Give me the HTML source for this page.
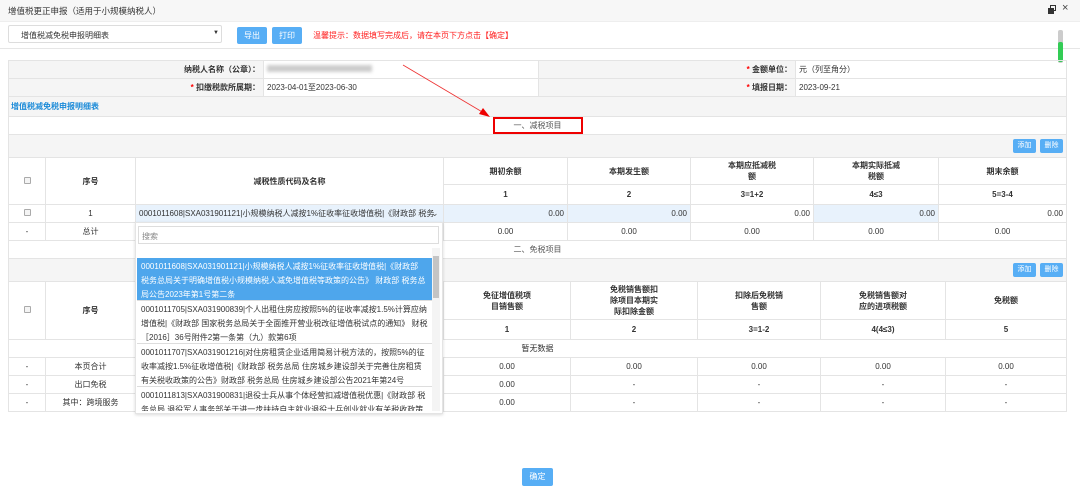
<!DOCTYPE html>
<html><head><meta charset="utf-8"><style>
*{margin:0;padding:0;box-sizing:border-box}
body{width:1080px;height:491px;overflow:hidden;background:#fff;font-family:"Liberation Sans","Noto Sans CJK SC",sans-serif;font-size:8px;color:#333;position:relative}
.a{position:absolute}
table{border-collapse:collapse;position:absolute;table-layout:fixed}
td{border:1px solid #e4e4e4;text-align:center;font-size:8px;padding:0 3px;overflow:hidden;white-space:nowrap}
.g{background:#f5f5f5}
.b{font-weight:bold}
.btn{position:absolute;background:#57aef5;color:#fff;font-size:8px;text-align:center;border-radius:2px}
.hl{background:#e8f2fc}
.r{text-align:right}
.cb{display:inline-block;width:7px;height:7px;border:1px solid #aaa;border-radius:1px;background:#f4f4f4}
.it{padding:2px 4px;line-height:14px;font-size:8px;border-bottom:1px solid #ddd;white-space:normal;height:43px;overflow:hidden}
</style></head><body>
<div class="a" style="left:0;top:0;width:1080px;height:22px;background:#f7f7f7;border-bottom:1px solid #eee"></div>
<div class="a" style="left:8px;top:5px;font-size:8.5px">增值税更正申报（适用于小规模纳税人）</div>
<div class="a" style="left:1050px;top:5px;width:6px;height:6px;border:1.5px solid #333"></div>
<div class="a" style="left:1048px;top:8px;width:6px;height:6px;background:#333"></div>
<div class="a" style="left:1062px;top:2px;font-size:11px;color:#444">×</div>
<div class="a" style="left:8px;top:25px;width:214px;height:18px;border:1px solid #ddd;border-radius:2px;padding:4px 12px;font-size:8px">增值税减免税申报明细表</div>
<div class="a" style="left:213px;top:30px;font-size:6px">▼</div>
<div class="btn" style="left:237px;top:27px;width:30px;height:17px;line-height:17px">导出</div>
<div class="btn" style="left:272px;top:27px;width:30px;height:17px;line-height:17px">打印</div>
<div class="a" style="left:313px;top:30px;color:#f22;font-size:8px">温馨提示：数据填写完成后，请在本页下方点击【确定】</div>
<div class="a" style="left:0;top:48px;width:1080px;height:1px;background:#e6e6e6"></div>
<div class="a" style="left:1058px;top:30px;width:5px;height:33px;background:#ccc;border-radius:2px"></div>
<div class="a" style="left:1058px;top:42px;width:5px;height:20px;background:#3c5;border-radius:2px"></div>

<table style="left:8px;top:60px;width:1059px">
<col style="width:255px"><col style="width:275px"><col style="width:257px"><col>
<tr style="height:18px"><td class="g b r">纳税人名称（公章）：</td><td style="text-align:left"><span style="display:inline-block;width:105px;height:7px;background:#ccc;filter:blur(1.5px)"></span></td><td class="g b r"><span style="color:red">*</span> 金额单位：</td><td style="text-align:left">元（列至角分）</td></tr>
<tr style="height:18px"><td class="g b r"><span style="color:red">*</span> 扣缴税款所属期：</td><td style="text-align:left">2023-04-01至2023-06-30</td><td class="g b r"><span style="color:red">*</span> 填报日期：</td><td style="text-align:left">2023-09-21</td></tr>
<tr style="height:20px"><td colspan="4" class="g" style="text-align:left;padding-left:2px;color:#1a8ad8;font-weight:bold">增值税减免税申报明细表</td></tr>
<tr style="height:18px"><td colspan="4"><span style="display:inline-block;border:2px solid #e00;width:90px;height:17px;line-height:13px;color:#555">一、减税项目</span></td></tr>
<tr style="height:23px"><td colspan="4" class="g"></td></tr>
</table>
<div class="btn" style="left:1013px;top:139px;width:23px;height:14px;line-height:14px;font-size:7px">添加</div>
<div class="btn" style="left:1040px;top:139px;width:23px;height:14px;line-height:14px;font-size:7px">删除</div>

<table style="left:8px;top:157px;width:1059px">
<col style="width:37px"><col style="width:90px"><col style="width:308px"><col style="width:124px"><col style="width:123px"><col style="width:123px"><col style="width:125px"><col>
<tr style="height:27px" class="b"><td rowspan="2"><span class="cb"></span></td><td rowspan="2">序号</td><td rowspan="2">减税性质代码及名称</td><td>期初余额</td><td>本期发生额</td><td style="white-space:normal">本期应抵减税<br>额</td><td>本期实际抵减<br>税额</td><td>期末余额</td></tr>
<tr style="height:20px" class="b"><td>1</td><td>2</td><td>3=1+2</td><td>4≤3</td><td>5=3-4</td></tr>
<tr style="height:18px"><td><span class="cb"></span></td><td>1</td><td class="hl" style="text-align:left">0001011608|SXA031901121|小规模纳税人减按1%征收率征收增值税|《财政部 税务</td><td class="hl r">0.00</td><td class="hl r">0.00</td><td class="r">0.00</td><td class="hl r">0.00</td><td class="r">0.00</td></tr>
<tr style="height:18px"><td>-</td><td>总计</td><td></td><td>0.00</td><td>0.00</td><td>0.00</td><td>0.00</td><td>0.00</td></tr>
<tr style="height:18px"><td colspan="8" style="color:#555">二、免税项目</td></tr>
<tr style="height:23px"><td colspan="8" class="g"></td></tr>
</table>
<div class="a" style="left:431px;top:208px;font-size:9px;color:#555">⌄</div>
<div class="btn" style="left:1013px;top:263px;width:23px;height:14px;line-height:14px;font-size:7px">添加</div>
<div class="btn" style="left:1040px;top:263px;width:23px;height:14px;line-height:14px;font-size:7px">删除</div>

<table style="left:8px;top:281px;width:1059px">
<col style="width:37px"><col style="width:90px"><col style="width:308px"><col style="width:127px"><col style="width:127px"><col style="width:123px"><col style="width:125px"><col>
<tr style="height:38px" class="b"><td rowspan="2"><span class="cb"></span></td><td rowspan="2">序号</td><td rowspan="2"></td><td>免征增值税项<br>目销售额</td><td style="line-height:11px">免税销售额扣<br>除项目本期实<br>际扣除金额</td><td>扣除后免税销<br>售额</td><td>免税销售额对<br>应的进项税额</td><td>免税额</td></tr>
<tr style="height:20px" class="b"><td>1</td><td>2</td><td>3=1-2</td><td>4(4≤3)</td><td>5</td></tr>
<tr style="height:18px"><td colspan="8">暂无数据</td></tr>
<tr style="height:18px"><td>-</td><td>本页合计</td><td></td><td>0.00</td><td>0.00</td><td>0.00</td><td>0.00</td><td>0.00</td></tr>
<tr style="height:18px"><td>-</td><td>出口免税</td><td></td><td>0.00</td><td>-</td><td>-</td><td>-</td><td>-</td></tr>
<tr style="height:18px"><td>-</td><td>其中：跨境服务</td><td></td><td>0.00</td><td>-</td><td>-</td><td>-</td><td>-</td></tr>
</table>

<div class="a" style="left:135px;top:222px;width:308px;height:192px;background:#fff;border:1px solid #e4e4e4;box-shadow:0 1px 3px rgba(0,0,0,.15)"></div>
<div class="a" style="left:138px;top:226px;width:301px;height:18px;border:1px solid #ddd;padding:4px 3px;color:#888">搜索</div>
<div class="a" style="left:432px;top:248px;width:8px;height:163px;background:#f4f4f4"></div>
<div class="a" style="left:433px;top:256px;width:6px;height:42px;background:#c4c4c4"></div>
<div class="a" style="left:137px;top:258px;width:295px;height:153px;overflow:hidden">
<div class="it" style="background:#4ea6ec;color:#fff">0001011608|SXA031901121|小规模纳税人减按1%征收率征收增值税|《财政部 税务总局关于明确增值税小规模纳税人减免增值税等政策的公告》 财政部 税务总局公告2023年第1号第二条</div>
<div class="it">0001011705|SXA031900839|个人出租住房应按照5%的征收率减按1.5%计算应纳增值税|《财政部 国家税务总局关于全面推开营业税改征增值税试点的通知》 财税［2016］36号附件2第一条第（九）款第6项</div>
<div class="it">0001011707|SXA031901216|对住房租赁企业适用简易计税方法的，按照5%的征收率减按1.5%征收增值税|《财政部 税务总局 住房城乡建设部关于完善住房租赁有关税收政策的公告》财政部 税务总局 住房城乡建设部公告2021年第24号</div>
<div class="it">0001011813|SXA031900831|退役士兵从事个体经营扣减增值税优惠|《财政部 税务总局 退役军人事务部关于进一步扶持自主就业退役士兵创业就业有关税收政策的公告》</div>
</div>

<svg class="a" style="left:0;top:0" width="1080" height="491"><line x1="403" y1="65" x2="484" y2="113" stroke="#e33" stroke-width="0.8"/><polygon points="490,117 479,114 483,108" fill="#e00"/></svg>

<div class="btn" style="left:522px;top:468px;width:31px;height:18px;line-height:18px">确定</div>
</body></html>
